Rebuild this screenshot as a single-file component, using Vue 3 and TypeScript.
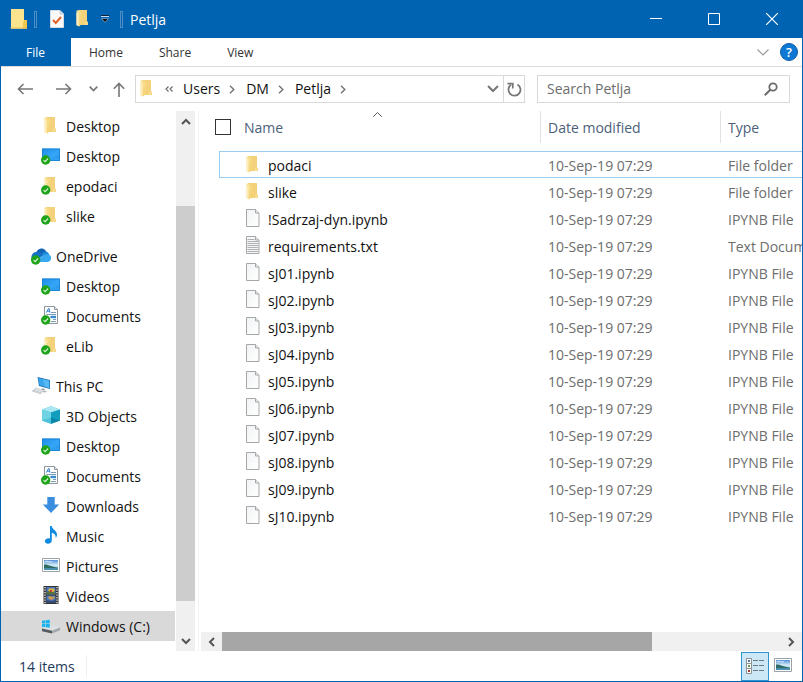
<script setup lang="ts">
import { ref } from 'vue'

interface NavItem {
  label: string
  icon: string
  synced?: boolean
  root?: boolean
  selected?: boolean
}

interface FileEntry {
  name: string
  icon: string
  type: string
}

const navGroups: NavItem[][] = [
  [
    { label: 'Desktop', icon: 'folder' },
    { label: 'Desktop', icon: 'desktop', synced: true },
    { label: 'epodaci', icon: 'folder', synced: true },
    { label: 'slike', icon: 'folder', synced: true },
  ],
  [
    { label: 'OneDrive', icon: 'onedrive', synced: true, root: true },
    { label: 'Desktop', icon: 'desktop', synced: true },
    { label: 'Documents', icon: 'documents', synced: true },
    { label: 'eLib', icon: 'folder', synced: true },
  ],
  [
    { label: 'This PC', icon: 'pc', root: true },
    { label: '3D Objects', icon: 'cube' },
    { label: 'Desktop', icon: 'desktop', synced: true },
    { label: 'Documents', icon: 'documents', synced: true },
    { label: 'Downloads', icon: 'download' },
    { label: 'Music', icon: 'music' },
    { label: 'Pictures', icon: 'picture' },
    { label: 'Videos', icon: 'video' },
    { label: 'Windows (C:)', icon: 'drive', selected: true },
  ],
]

const notebooks: FileEntry[] = Array.from({ length: 10 }, (_, i) => ({
  name: `sJ${String(i + 1).padStart(2, '0')}.ipynb`,
  icon: 'file',
  type: 'IPYNB File',
}))

const files: FileEntry[] = [
  { name: 'podaci', icon: 'folder', type: 'File folder' },
  { name: 'slike', icon: 'folder', type: 'File folder' },
  { name: '!Sadrzaj-dyn.ipynb', icon: 'file', type: 'IPYNB File' },
  { name: 'requirements.txt', icon: 'text', type: 'Text Document' },
  ...notebooks,
]

const modified = '10-Sep-19 07:29'
const crumbs = ['Users', 'DM', 'Petlja']
const focused = ref(0)
const query = ref('')
const allSelected = ref(false)
</script>

<template>
  <svg class="sprite" aria-hidden="true">
    <defs>
      <linearGradient id="g-folder" x1="0" y1="0" x2="1" y2="1">
        <stop offset="0" stop-color="#fbe5a0" />
        <stop offset="1" stop-color="#f3cf6b" />
      </linearGradient>
      <linearGradient id="g-desk" x1="0" y1="0" x2="1" y2="1">
        <stop offset="0" stop-color="#1c8de6" />
        <stop offset="0.6" stop-color="#35a6f7" />
        <stop offset="1" stop-color="#1d8fe8" />
      </linearGradient>
      <linearGradient id="g-sky" x1="0" y1="0" x2="0" y2="1">
        <stop offset="0" stop-color="#4f8fd8" />
        <stop offset="0.5" stop-color="#d5ecf8" />
        <stop offset="1" stop-color="#8cc0dc" />
      </linearGradient>
      <linearGradient id="g-page" x1="0" y1="0" x2="1" y2="1">
        <stop offset="0" stop-color="#f1f3f4" />
        <stop offset="1" stop-color="#ffffff" />
      </linearGradient>
    </defs>
    <symbol id="folder" viewBox="0 0 20 20">
      <path d="M5 1h9v11.500l1 .5v3H5z" fill="#f4d27b" />
      <path d="M12 12.500h2.500v3.500H12z" fill="#f9dc8c" />
      <path d="M3.500 1.500H5l4 2.200v10L6.500 17.500 3.500 16z" fill="url(#g-folder)" />
      <path d="M3.500 3.500 5.500 4.500v13L3.500 16z" fill="#fdeebf" />
    </symbol>
    <symbol id="big-folder" viewBox="0 0 18 20">
      <path d="M1 0h13v11h3v8.500H1z" fill="#f9dc7c" />
      <path d="M1 0h13v13l-2 6.500H1z" fill="#fce48e" />
      <path d="M14.500 11H17v8.500h-4v-6z" fill="#efc54b" />
      <path d="M.5 18.500h16v1H.5z" fill="#eac45a" />
    </symbol>
    <symbol id="desktop" viewBox="0 0 20 20">
      <path d="M1 2.500h18V15H1z" fill="url(#g-desk)" />
      <path d="M19 2.500V12L9 15h10z" fill="#46b0fa" opacity=".5" />
      <path d="M1.500 3h17v11.500h-17z" fill="none" stroke="#1680d2" stroke-width=".8" />
    </symbol>
    <symbol id="documents" viewBox="0 0 20 20">
      <path d="M3.500.5h10l3 3v14h-13z" fill="#fafcfd" stroke="#8f989e" />
      <path d="M13.500.5v3h3" fill="#dde3e7" stroke="#8f989e" />
      <path d="M5.500 6.500 7.500 2.500h.6l.7 4M6.300 5.200h2.200" fill="none" stroke="#2f7fc8" />
      <path d="M10 6.500h5M5.500 8.500H15M12 13.500h3M10 15.500h5" stroke="#7e9cb5" />
      <path d="M9.500 9.800H15v2.400H9.500z" fill="#398ccf" />
    </symbol>
    <symbol id="onedrive" viewBox="0 0 20 20">
      <path d="M5.500 6C7 2.400 11.500 1 14.500 4.500L16 7l-8 5z" fill="#0f63b4" />
      <path d="M1 14C-.8 10.500 1.400 6 5.800 5.800c2.200 0 3.600.8 5.200 2.200L4 16H3z" fill="#1572c6" />
      <path d="M11 8c1.500-2.300 4-3.300 6-1.600 1 .9 1 1.700 1 2.400L12 13z" fill="#2086d8" />
      <path d="M4 16l7-6.200c2-1 3.400-1.600 5.500-1.600 3 0 4.500 2.900 3.200 5.600-.8 1.600-1.900 2.200-3.500 2.200z" fill="#38a9ee" />
    </symbol>
    <symbol id="pc" viewBox="0 0 20 20">
      <path d="M6.500 1 19 4v9L8 10z" fill="#1a72b8" />
      <path d="M7.300 2 18.200 4.700v7.200L8.600 9.300z" fill="#3ba6ee" />
      <path d="M12 3.200 18.200 4.700v7.200L14 10.800z" fill="#57b8f5" />
      <path d="M11 12.200l3 .8-1 2 3 .6-2 .8-5-1.500z" fill="#9aa2a7" />
      <path d="M5 11.500l8.500 3L9.500 18.300.5 15.200z" fill="#c3c9cd" />
      <path d="M3.500 13.500l7.500 2.800M5 12.500l7.500 2.800M4 16l3-3.800M7 17l3-3.800" stroke="#f3f5f6" stroke-width=".6" />
    </symbol>
    <symbol id="cube" viewBox="0 0 20 20">
      <path d="M10 .3 19 3.500v11L10 17.800 1 14.500v-11z" fill="#35bcd4" />
      <path d="M10 .3 19 3.500 10 6.500 1 3.500z" fill="#a9e8f2" />
      <path d="M1 3.500 10 6.500v11.300L1 14.500z" fill="#6ed3e3" />
      <path d="M19 3.500 10 6.500v11.300l9-3.300z" fill="#149ebd" />
      <path d="M1 14.500 10 11.500v6.300z" fill="#4cc3da" />
      <path d="M19 14.500 10 11.500v6.300z" fill="#0c86a8" />
    </symbol>
    <symbol id="download" viewBox="0 0 20 20">
      <path d="M6.300 1h7.400v7.500h4.500L10 17 1.800 8.500h4.500z" fill="#3a8ede" />
    </symbol>
    <symbol id="music" viewBox="0 0 20 20">
      <path d="M9 0h1.800c.3 3.500 5.200 4.500 5.200 8.500 0 1.500-.6 2.800-1.300 3.700.5-3-1.600-4.800-3.900-5.400v7.400c0 2.200-1.800 3.600-3.700 3.600-2 0-3.200-1.100-3.200-2.500 0-1.700 1.800-3 3.700-3 .6 0 1 .1 1.400.3z" fill="#0f8ce0" />
    </symbol>
    <symbol id="picture" viewBox="0 0 20 20">
      <path d="M1.500 2.500h17v13h-17z" fill="#fff" stroke="#9ba3a8" />
      <path d="M3 4h14v10H3z" fill="url(#g-sky)" />
      <path d="M3 8.500c3-.5 7 2 14 3v1H3z" fill="#2f6b62" />
      <path d="M3 12h14v2H3z" fill="#4a8eb0" />
      <path d="M4 5.500c3-1 4 1 7 .3" stroke="#fff" fill="none" opacity=".7" />
    </symbol>
    <symbol id="video" viewBox="0 0 20 20">
      <path d="M2.500 0h15v18h-15z" fill="#333" />
      <path d="M4 1v17M16 1v17" stroke="#ddd" stroke-width="1.500" stroke-dasharray="1.300 1.200" />
      <path d="M5.500 1h9v7.500h-9zM5.500 9.500h9V17h-9z" fill="#4a79c2" />
      <path d="M8 2.500h5l1 2-2 2H9l-2-2z" fill="#e1b23a" />
      <path d="M5.500 6 9 5l5.500 2v1.500h-9z" fill="#58713b" />
      <path d="M9 4h2v2H9z" fill="#c44332" />
      <path d="M7 11l2.500-1 2 1 2-1v2.500L10 14l-2-1z" fill="#ca9950" />
      <path d="M5.500 14l5 1 4-1v3h-9z" fill="#364b72" />
    </symbol>
    <symbol id="drive" viewBox="0 0 20 20">
      <path d="M1 12.500 6 9.500h9l4 2-8 3.500z" fill="#dde0e2" />
      <path d="M1 12.500 11 14.800v2.700L1 15.200z" fill="#555b60" />
      <path d="M11 14.800 19 11.500v2.700l-8 3.300z" fill="#a1a7ab" />
      <path d="M1 4.800 4.500 4.300v3.200H1zM5 4.200 8.800 3.700v3.800H5zM1 8h3.500v3.200L1 10.700zM5 8h3.800v3.800L5 11.300z" fill="#19b4ef" />
    </symbol>
    <symbol id="file" viewBox="0 0 20 20">
      <path d="M3.500.5h9l3.500 3.500v13.500H3.500z" fill="url(#g-page)" stroke="#a5a8aa" />
      <path d="M12.500.5V4H16" fill="#e6e9eb" stroke="#a5a8aa" />
    </symbol>
    <symbol id="text" viewBox="0 0 20 20">
      <path d="M3.500.5h9l3.500 3.500v13.500H3.500z" fill="#f7f7f7" stroke="#a5a8aa" />
      <path d="M12.500.5V4H16" fill="#e6e9eb" stroke="#a5a8aa" />
      <path d="M4.500 3.500h7M4.500 5.500h11M4.500 7.500h11M4.500 9.500h11M4.500 11.500h11M4.500 13.500h11M4.500 15.500h11" stroke="#aeb1b3" />
    </symbol>
    <symbol id="badge" viewBox="0 0 20 20">
      <circle cx="4.700" cy="14" r="4.700" fill="#1fa31a" />
      <path d="M2.500 14.200l1.600 1.500 3-3.200" fill="none" stroke="#d9f5d5" stroke-width="1.100" />
    </symbol>
  </svg>

  <div class="window">
    <header class="titlebar">
      <svg class="app-icon" aria-hidden="true"><use href="#big-folder" /></svg>
      <span class="divider"></span>
      <button class="quick" aria-label="Properties">
        <svg width="14" height="18" viewBox="0 0 14 18">
          <path d="M.5.500h9.500l3.500 3.500v13.500H.5z" fill="#fafafa" stroke="#d4dbe2" />
          <path d="M10 .5V4h3.500" fill="#dfe5ea" stroke="#c0cad3" />
          <path d="M3 10l2.800 3 5.200-6" fill="none" stroke="#e2622b" stroke-width="2" />
        </svg>
      </button>
      <button class="quick" aria-label="New folder">
        <svg width="20" height="20"><use href="#folder" /></svg>
      </button>
      <button class="quick more" aria-label="Customize toolbar">
        <svg width="8" height="8" viewBox="0 0 8 8">
          <path d="M0 .5h8" stroke="#10243c" />
          <path d="M0 1.500h8" stroke="#c7dcf0" />
          <path d="M.5 3.500h7L4 7.500z" fill="#0b1522" stroke="#c7dcf0" stroke-width=".5" />
        </svg>
      </button>
      <span class="divider"></span>
      <h1>Petlja</h1>
      <div class="controls">
        <button aria-label="Minimize">
          <svg width="12" height="12"><path d="M0 5.500h12" stroke="#fff" /></svg>
        </button>
        <button aria-label="Maximize">
          <svg width="12" height="12"><path d="M.5.500h11v11H.5z" fill="none" stroke="#fff" /></svg>
        </button>
        <button aria-label="Close">
          <svg width="12" height="12"><path d="M0 0l12 12M12 0L0 12" stroke="#fff" stroke-width="1.200" /></svg>
        </button>
      </div>
    </header>

    <nav class="ribbon" aria-label="Ribbon">
      <button class="tab file">File</button>
      <button class="tab">Home</button>
      <button class="tab">Share</button>
      <button class="tab">View</button>
      <div class="ribbon-end">
        <button aria-label="Expand ribbon">
          <svg width="12" height="7"><path d="M.5.500 6 6 11.500.500" fill="none" stroke="#9b9b9b" stroke-width="1.200" /></svg>
        </button>
        <button class="help" aria-label="Help">?</button>
      </div>
    </nav>

    <div class="location">
      <button class="go" aria-label="Back">
        <svg width="16" height="12" viewBox="0 0 16 12"><path d="M16 6H1.500M6.500 1l-5 5 5 5" fill="none" stroke="#777" stroke-width="1.600" /></svg>
      </button>
      <button class="go forward" aria-label="Forward">
        <svg width="16" height="12" viewBox="0 0 16 12"><path d="M0 6h14.500M9.500 1l5 5-5 5" fill="none" stroke="#777" stroke-width="1.600" /></svg>
      </button>
      <button class="go recent" aria-label="Recent locations">
        <svg width="9" height="6" viewBox="0 0 9 6"><path d="M.7.700 4.500 4.500 8.300.700" fill="none" stroke="#777" stroke-width="1.700" /></svg>
      </button>
      <button class="go up" aria-label="Up">
        <svg width="12" height="15" viewBox="0 0 12 15"><path d="M6 15V1.500M.8 6.700 6 1.500l5.200 5.200" fill="none" stroke="#777" stroke-width="1.600" /></svg>
      </button>
      <div class="address">
        <svg class="icon" aria-hidden="true"><use href="#folder" /></svg>
        <button class="earlier" aria-label="Earlier folders">
          <svg width="8" height="6" viewBox="0 0 8 6"><path d="M3.500.500 1 3l2.500 2.500M7.500.500 5 3l2.500 2.500" fill="none" stroke="#666" stroke-width="1.100" /></svg>
        </button>
        <template v-for="crumb in crumbs" :key="crumb">
          <a href="#" class="crumb">{{ crumb }}</a>
          <svg class="chev" width="6" height="9" viewBox="0 0 6 9" aria-hidden="true"><path d="M1 .7 4.800 4.500 1 8.300" fill="none" stroke="#777" stroke-width="1.500" /></svg>
        </template>
        <button class="drop" aria-label="Previous locations">
          <svg width="12" height="8" viewBox="0 0 12 8"><path d="M1 1l5 5 5-5" fill="none" stroke="#777" stroke-width="2" /></svg>
        </button>
        <button class="refresh" aria-label="Refresh">
          <svg width="15" height="15" viewBox="0 0 15 15">
            <path d="M10.500 2.500a6 6 0 1 1-6.500.300" fill="none" stroke="#777" stroke-width="1.800" />
            <path d="M.5 1.600h5.300v5" fill="none" stroke="#777" stroke-width="1.700" />
          </svg>
        </button>
      </div>
      <label class="search">
        <input v-model="query" type="text" placeholder="Search Petlja" aria-label="Search Petlja" />
        <svg width="14" height="14" viewBox="0 0 14 14" aria-hidden="true">
          <circle cx="9" cy="5" r="3.700" fill="none" stroke="#6c6c6c" stroke-width="1.800" />
          <path d="M6.300 7.700.8 13.200" stroke="#6c6c6c" stroke-width="2" />
        </svg>
      </label>
    </div>

    <div class="body">
      <nav class="tree" aria-label="Folders">
        <ul v-for="(group, g) in navGroups" :key="g">
          <li v-for="item in group" :key="item.label + item.icon">
            <a href="#" class="node" :class="{ root: item.root, selected: item.selected }">
              <svg class="icon" aria-hidden="true">
                <use :href="'#' + item.icon" />
                <use v-if="item.synced" href="#badge" />
              </svg>
              <span>{{ item.label }}</span>
            </a>
          </li>
        </ul>
      </nav>
      <div class="vbar">
        <button aria-label="Scroll up">
          <svg width="10" height="7" viewBox="0 0 10 7"><path d="M1 6l4-4 4 4" fill="none" stroke="#555" stroke-width="2" /></svg>
        </button>
        <div class="vtrack"><div class="vthumb"></div></div>
        <button aria-label="Scroll down">
          <svg width="10" height="7" viewBox="0 0 10 7"><path d="M1 1l4 4 4-4" fill="none" stroke="#555" stroke-width="2" /></svg>
        </button>
      </div>

      <main class="pane">
        <div class="listing">
          <table>
            <colgroup>
              <col class="c-check" />
              <col class="c-name" />
              <col class="c-date" />
              <col />
            </colgroup>
            <thead>
              <tr>
                <th class="check"><input v-model="allSelected" type="checkbox" aria-label="Select all" /></th>
                <th class="name">
                  Name
                  <svg class="sort" width="9" height="5" viewBox="0 0 9 5" aria-hidden="true"><path d="M.3 4.700 4.500.500l4.200 4.200" fill="none" stroke="#555" /></svg>
                </th>
                <th>Date modified</th>
                <th>Type</th>
              </tr>
            </thead>
            <tbody>
              <tr v-for="(file, i) in files" :key="file.name" :class="{ focused: i === focused }" @click="focused = i">
                <td></td>
                <td class="name">
                  <div class="entry">
                    <svg class="icon" aria-hidden="true"><use :href="'#' + file.icon" /></svg>
                    <span>{{ file.name }}</span>
                  </div>
                </td>
                <td>{{ modified }}</td>
                <td>{{ file.type }}</td>
              </tr>
            </tbody>
          </table>
        </div>
        <div class="hbar">
          <button aria-label="Scroll left">
            <svg width="7" height="10" viewBox="0 0 7 10"><path d="M6 1 2 5l4 4" fill="none" stroke="#555" stroke-width="2" /></svg>
          </button>
          <div class="htrack"><div class="hthumb"></div></div>
          <button aria-label="Scroll right">
            <svg width="7" height="10" viewBox="0 0 7 10"><path d="M1 1l4 4-4 4" fill="none" stroke="#555" stroke-width="2" /></svg>
          </button>
        </div>
      </main>
    </div>

    <footer class="status">
      <span class="count">14 items</span>
      <div class="views">
        <button class="active" aria-label="Details view">
          <svg width="18" height="17" viewBox="0 0 18 17">
            <path d="M.5.500h5v5h-5zM.5 5.500h5v5h-5zM.5 10.500h5v5h-5z" fill="#fff" stroke="#8b9296" />
            <path d="M2 2h2v2H2z" fill="#4d7a9c" />
            <path d="M2 7h2v2H2z" fill="#7a9448" />
            <path d="M2 12h2v2H2z" fill="#a33d34" />
            <path d="M7 2.500h5M13 2.500h5M7 7.500h5M13 7.500h5M7 12.500h5M13 12.500h5" stroke="#6f7a80" />
          </svg>
        </button>
        <button aria-label="Large icons view">
          <svg class="icon"><use href="#picture" /></svg>
        </button>
      </div>
    </footer>
  </div>
</template>

<style>
body {
  margin: 0;
  background: #fff;
}
</style>

<style scoped>
.sprite {
  position: absolute;
  width: 0;
  height: 0;
}

.window {
  display: flex;
  flex-direction: column;
  box-sizing: border-box;
  min-height: 100vh;
  border: 1px solid #0063b1;
  border-top: 0;
  background: #fff;
  color: #111;
  font: 14px/20px 'Open Sans', 'Noto Sans', sans-serif;
  overflow: hidden;
}

button {
  display: flex;
  align-items: center;
  justify-content: center;
  padding: 0;
  border: 0;
  background: none;
  color: inherit;
  font: inherit;
}

a {
  color: inherit;
  text-decoration: none;
}

svg {
  flex: none;
}

.icon {
  width: 20px;
  height: 20px;
}

.titlebar {
  display: flex;
  align-items: center;
  height: 38px;
  padding-left: 9px;
  background: #0063b1;
  color: #fff;
}

.app-icon {
  width: 18px;
  height: 20px;
}

.divider {
  width: 3px;
  height: 17px;
  margin: 0 7px 0 6px;
  border: 1px solid #4f8fc6;
  box-sizing: border-box;
}

.quick {
  width: 26px;
  height: 24px;
}

.quick.more {
  width: 18px;
}

h1 {
  margin: 0;
  padding-top: 2px;
  font-size: 14px;
  font-weight: 400;
}

.controls {
  display: flex;
  margin-left: auto;
  padding-right: 1px;
}

.controls button {
  width: 58px;
  height: 38px;
}

.ribbon {
  display: flex;
  height: 28px;
  border-bottom: 1px solid #dadbdc;
  color: #333;
  font-size: 12px;
}

.tab {
  padding: 2px 18px 0;
}

.tab.file {
  padding: 2px 26px 0 25px;
  background: #0063b1;
  color: #fff;
}

.ribbon-end {
  display: flex;
  align-items: center;
  gap: 11px;
  margin-left: auto;
  padding-right: 4px;
}

.help {
  width: 18px;
  height: 18px;
  border: 1px solid #0a5cab;
  border-radius: 50%;
  background: #0f78d4;
  color: #fff;
  font-size: 13px;
  font-weight: 600;
  line-height: 16px;
}

.location {
  display: flex;
  align-items: center;
  height: 44px;
  padding: 0 12px 0 16px;
}

.forward {
  margin-left: 23px;
}

.recent {
  margin-left: 17px;
}

.up {
  margin: 0 10px 0 15px;
}

.address {
  display: flex;
  align-items: center;
  flex: 1;
  box-sizing: border-box;
  min-width: 0;
  height: 28px;
  padding-left: 1px;
  border: 1px solid #d9d9d9;
}

.earlier {
  margin: 0 10px 0 8px;
}

.chev {
  margin: 0 11px 0 9px;
}

.drop {
  width: 20px;
  height: 26px;
  margin-left: auto;
}

.refresh {
  width: 21px;
  height: 26px;
  border-left: 1px solid #d9d9d9;
}

.search {
  display: flex;
  align-items: center;
  flex: 0 1 253px;
  box-sizing: border-box;
  min-width: 0;
  height: 28px;
  margin-left: 12px;
  padding: 0 11px 0 9px;
  border: 1px solid #d9d9d9;
}

.search input {
  flex: 1;
  min-width: 0;
  padding: 0;
  border: 0;
  outline: 0;
  background: none;
  font: inherit;
}

.search input::placeholder {
  color: #6d6d6d;
  opacity: 1;
}

.body {
  display: flex;
  flex: 1;
}

.tree {
  width: 175px;
  padding-bottom: 10px;
}

.tree ul {
  margin: 0 0 10px;
  padding: 0;
  list-style: none;
}

.tree ul:last-child {
  margin: 0;
}

.node {
  display: flex;
  align-items: center;
  gap: 5px;
  height: 30px;
  margin-right: 1px;
  padding-left: 40px;
  white-space: nowrap;
}

.node span {
  padding-top: 2px;
}

.node.root {
  padding-left: 30px;
}

.node.selected {
  background: #d9d9d9;
}

.vbar {
  display: flex;
  flex-direction: column;
  width: 19px;
  background: #f0f0f0;
}

.vbar button {
  height: 20px;
}

.vtrack {
  display: flex;
  flex: 1;
  flex-direction: column;
  justify-content: flex-end;
  padding-bottom: 30px;
}

.vthumb {
  height: 84%;
  background: #cdcdcd;
}

.pane {
  display: flex;
  flex: 1;
  flex-direction: column;
  min-width: 0;
  margin-left: 3px;
  border-left: 1px solid #f3f3f3;
  padding-left: 2px;
}

.listing {
  flex: 1;
  overflow: hidden;
}

table {
  width: 120%;
  table-layout: fixed;
  border-collapse: separate;
  border-spacing: 0;
}

.c-check {
  width: 18px;
}

.c-name {
  width: 321px;
}

.c-date {
  width: 180px;
}

th {
  position: relative;
  height: 30px;
  padding: 2px 0 0 7px;
  border-left: 1px solid #e2e2e2;
  color: #4c607a;
  font-weight: 400;
  text-align: left;
}

th.check,
th.name {
  border-left: 0;
}

th.check {
  padding: 0 0 0 14px;
}

th.name {
  padding-left: 25px;
}

th input {
  display: block;
  appearance: none;
  box-sizing: border-box;
  width: 16px;
  height: 16px;
  margin: 0;
  border: 1px solid #333;
  background: #fff;
}

.sort {
  position: absolute;
  top: 1px;
  left: 48%;
}

tbody::before {
  content: '';
  display: block;
  height: 8px;
}

td {
  height: 23px;
  padding: 2px 0 0 8px;
  border: 1px solid transparent;
  border-width: 1px 0;
  color: #6d6d6d;
  line-height: 23px;
  white-space: nowrap;
}

td.name {
  padding-left: 23px;
  border-left-width: 1px;
  color: #111;
}

.focused td:not(:first-child) {
  border-color: #99cdee;
}

.entry {
  display: flex;
  align-items: flex-start;
  gap: 5px;
}

.entry .icon {
  padding-top: 1px;
}

.hbar {
  display: flex;
  height: 19px;
  background: #f0f0f0;
}

.hbar button {
  width: 21px;
}

.htrack {
  flex: 1;
}

.hthumb {
  width: 77%;
  height: 19px;
  background: #a6a6a6;
}

.status {
  display: flex;
  align-items: center;
  height: 30px;
  padding-left: 18px;
  color: #1e395b;
}

.count {
  padding: 2px 11px 0 0;
  border-right: 1px solid #f0f0f0;
}

.views {
  display: flex;
  margin-left: auto;
  padding-right: 5px;
}

.views button {
  box-sizing: border-box;
  width: 28px;
  height: 29px;
}

.views .active {
  border: 1px solid #2f93cf;
  background: #cce8f6;
}
</style>
